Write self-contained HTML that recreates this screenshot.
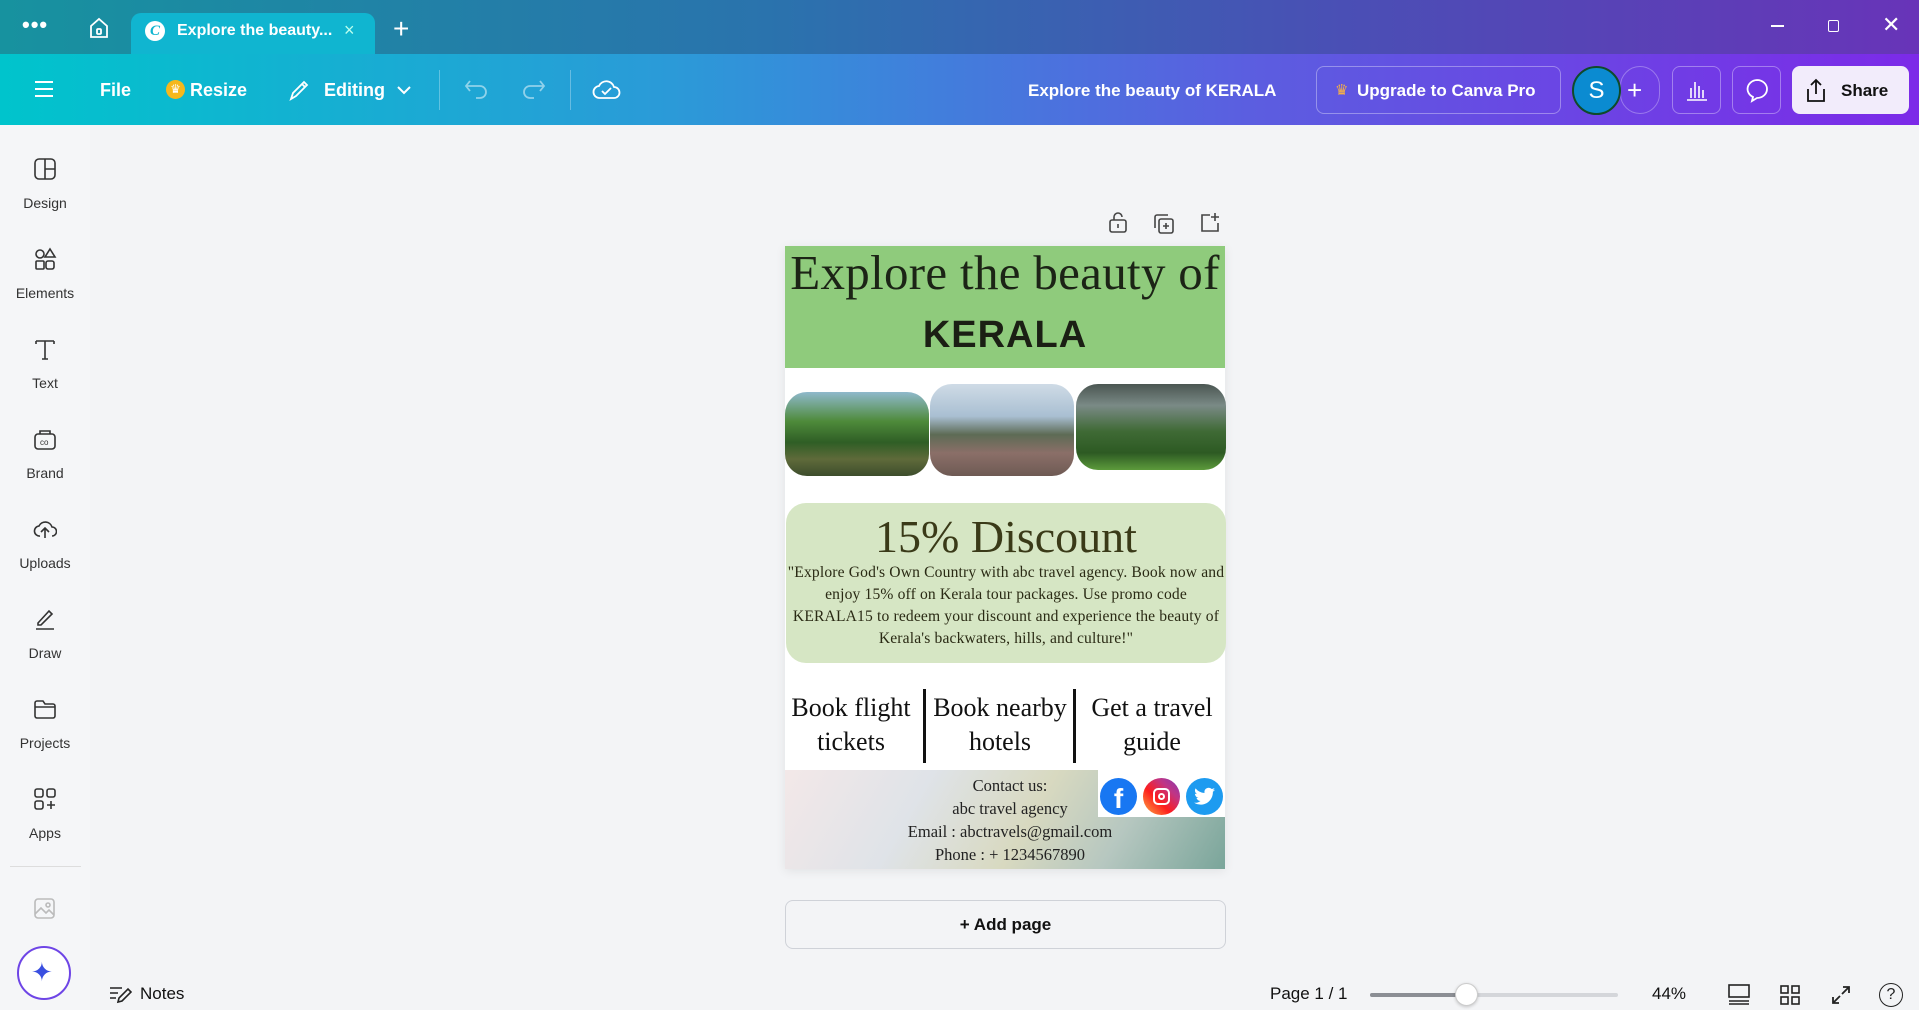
<!DOCTYPE html>
<html><head><meta charset="utf-8"><style>
*{margin:0;padding:0;box-sizing:border-box}
body{width:1919px;height:1010px;overflow:hidden;background:#f3f4f6;font-family:"Liberation Sans",sans-serif;position:relative}
.abs{position:absolute}
.titlebar{left:0;top:0;width:1919px;height:54px;background:linear-gradient(90deg,#17929f 0%,#2a73ad 40%,#4a4fb5 70%,#6834b8 100%)}
.toolbar{left:0;top:54px;width:1919px;height:71px;background:linear-gradient(90deg,#00c4cc 0%,#2b9ad8 35%,#5b5ee0 65%,#7c2ae8 100%)}
.tab{left:131px;top:13px;width:244px;height:41px;background:#10b5d0;border-radius:10px 10px 0 0}
.w{color:#fff;font-weight:bold;font-size:18px}
.side{left:0;top:125px;width:90px;height:885px;background:#f5f6f8}
.si{position:absolute;left:0;width:90px;text-align:center;font-size:14px;color:#333}
.si svg{display:block;margin:0 auto 14px}
.serif{font-family:"Liberation Serif",serif;color:#222}
.btn{border:1px solid rgba(255,255,255,.35);border-radius:8px}
</style></head><body>
<div class="abs titlebar"></div>
<div class="abs tab"></div>
<div class="abs w" style="left:22px;top:12px;font-size:22px;letter-spacing:1px">•••</div>
<svg class="abs" style="left:88px;top:17px" width="22" height="22" viewBox="0 0 22 22" fill="none" stroke="#fff" stroke-width="1.8"><path d="M3 9 11 2l8 7v11H3z"/><rect x="9" y="12" width="4" height="5" rx="1"/></svg>
<div class="abs" style="left:145px;top:21px;width:20px;height:20px;border-radius:50%;background:#fff;color:#10b5d0;font:bold italic 15px 'Liberation Serif';text-align:center;line-height:20px">C</div>
<div class="abs w" style="left:177px;top:22px;font-size:16px">Explore the beauty...</div>
<div class="abs" style="left:344px;top:20px;color:#bfe;font-size:18px">×</div>
<div class="abs" style="left:393px;top:13px;color:#fff;font-size:28px">+</div>
<div class="abs" style="left:1771px;top:25px;width:13px;height:1.5px;background:#fff"></div>
<div class="abs" style="left:1828px;top:20px;width:11px;height:12px;border:1.5px solid #fff;border-radius:2px"></div>
<div class="abs" style="left:1882px;top:12px;color:#fff;font-size:22px">✕</div>

<div class="abs toolbar"></div>
<svg class="abs" style="left:34px;top:80px" width="20" height="18"><path d="M1 2h18M1 9h18M1 16h18" stroke="#fff" stroke-width="2"/></svg>
<div class="abs w" style="left:100px;top:80px">File</div>
<div class="abs" style="left:166px;top:80px;width:19px;height:19px;border-radius:50%;background:#f5b81c;color:#fff;font-size:12px;text-align:center;line-height:19px">♛</div>
<div class="abs w" style="left:190px;top:80px">Resize</div>
<svg class="abs" style="left:287px;top:78px" width="24" height="24" fill="none" stroke="#fff" stroke-width="1.8"><path d="M4 21l2-6L17 4l3 3L9 18z M15 6l3 3"/></svg>
<div class="abs w" style="left:324px;top:80px">Editing</div>
<svg class="abs" style="left:396px;top:85px" width="16" height="10" fill="none" stroke="#fff" stroke-width="2"><path d="M2 2l6 6 6-6"/></svg>
<div class="abs" style="left:439px;top:70px;width:1px;height:40px;background:rgba(255,255,255,.3)"></div>
<svg class="abs" style="left:464px;top:78px" width="26" height="22" fill="none" stroke="rgba(255,255,255,.5)" stroke-width="1.8"><path d="M6 3L2 8l4 5M2 8h14a6 6 0 010 12h-4"/></svg>
<svg class="abs" style="left:520px;top:78px" width="26" height="22" fill="none" stroke="rgba(255,255,255,.5)" stroke-width="1.8"><path d="M20 3l4 5-4 5M24 8H10a6 6 0 000 12h4"/></svg>
<div class="abs" style="left:570px;top:70px;width:1px;height:40px;background:rgba(255,255,255,.3)"></div>
<svg class="abs" style="left:592px;top:76px" width="30" height="26" fill="none" stroke="#fff" stroke-width="1.8"><path d="M8 22a6 6 0 01-1-12 8 8 0 0115 1 5 5 0 010 11z"/><path d="M10 15l3 3 6-6"/></svg>
<div class="abs w" style="left:1028px;top:81px;font-size:17px">Explore the beauty of KERALA</div>
<div class="abs btn" style="left:1316px;top:66px;width:245px;height:48px"></div>
<div class="abs" style="left:1335px;top:81px;color:#f7b045;font-size:15px">♛</div>
<div class="abs w" style="left:1357px;top:81px;font-size:17px">Upgrade to Canva Pro</div>
<div class="abs" style="left:1620px;top:66px;width:40px;height:48px;border:1px solid rgba(255,255,255,.3);border-radius:24px"></div>
<div class="abs w" style="left:1627px;top:75px;font-size:26px;font-weight:normal">+</div>
<div class="abs" style="left:1572px;top:66px;width:49px;height:49px;border-radius:50%;background:#0b8bd1;border:2px solid #0f4a2a;color:#fff;font-size:24px;text-align:center;line-height:45px">S</div>
<div class="abs btn" style="left:1672px;top:66px;width:49px;height:48px"></div>
<svg class="abs" style="left:1685px;top:78px" width="24" height="24" fill="none" stroke="#fff" stroke-width="1.6"><path d="M2 22h20M6 20V10M10 20V4M14 20V8M18 20V12"/></svg>
<div class="abs btn" style="left:1732px;top:66px;width:49px;height:48px"></div>
<svg class="abs" style="left:1744px;top:77px" width="26" height="26" fill="none" stroke="#fff" stroke-width="1.8"><path d="M13 3a10 9 0 110 18l-5 3 1-4a10 9 0 014-17z"/></svg>
<div class="abs" style="left:1792px;top:66px;width:117px;height:48px;background:#f2ecfb;border-radius:8px"></div>
<svg class="abs" style="left:1804px;top:77px" width="24" height="26" fill="none" stroke="#111" stroke-width="1.8"><path d="M12 17V3M7 8l5-5 5 5M4 12v12h16V12"/></svg>
<div class="abs" style="left:1841px;top:81px;font-size:17px;color:#111;font-weight:bold">Share</div>

<div class="abs side">
<div class="si" style="top:32px"><svg width="24" height="24" fill="none" stroke="#333" stroke-width="1.6"><rect x="2" y="2" width="20" height="20" rx="4"/><path d="M12 2v20M12 12h10"/></svg>Design</div>
<div class="si" style="top:122px"><svg width="24" height="24" fill="none" stroke="#333" stroke-width="1.6"><circle cx="7" cy="7" r="4"/><path d="M17 2l5 8h-10z"/><rect x="3" y="14" width="8" height="8" rx="1"/><rect x="13" y="14" width="8" height="8" rx="2"/></svg>Elements</div>
<div class="si" style="top:212px"><svg width="24" height="24" fill="none" stroke="#333" stroke-width="1.6"><path d="M3 4h18M12 4v18M3 4v3M21 4v3M9 22h6"/></svg>Text</div>
<div class="si" style="top:302px"><svg width="24" height="24" fill="none" stroke="#333" stroke-width="1.6"><rect x="2" y="7" width="20" height="15" rx="3"/><path d="M7 7V4h10v3"/><text x="7" y="18" font-size="8" fill="#333" stroke="none">co</text></svg>Brand</div>
<div class="si" style="top:392px"><svg width="24" height="24" fill="none" stroke="#333" stroke-width="1.6"><path d="M7 19a5 5 0 01-1-10 7 7 0 0113 1 4 4 0 010 9"/><path d="M12 21v-9M8 15l4-4 4 4"/></svg>Uploads</div>
<div class="si" style="top:482px"><svg width="24" height="24" fill="none" stroke="#333" stroke-width="1.6"><path d="M5 16L16 4l3 3L8 18H5z M3 22h18"/></svg>Draw</div>
<div class="si" style="top:572px"><svg width="24" height="24" fill="none" stroke="#333" stroke-width="1.6"><path d="M2 6a2 2 0 012-2h6l2 3h8a2 2 0 012 2v10a2 2 0 01-2 2H4a2 2 0 01-2-2z M2 10h20"/></svg>Projects</div>
<div class="si" style="top:662px"><svg width="24" height="24" fill="none" stroke="#333" stroke-width="1.6"><rect x="2" y="2" width="8" height="8" rx="2"/><rect x="14" y="2" width="8" height="8" rx="2"/><rect x="2" y="14" width="8" height="8" rx="2"/><path d="M18 14v8M14 18h8"/></svg>Apps</div>
<div class="abs" style="left:10px;top:741px;width:71px;height:1px;background:#ddd"></div>
<svg class="abs" style="left:33px;top:771px" width="24" height="24" fill="none" stroke="#bbb" stroke-width="1.6"><rect x="2" y="3" width="19" height="19" rx="3"/><path d="M2 18l6-6 5 5 3-3 5 5"/><circle cx="15" cy="9" r="2"/></svg>
<div class="abs" style="left:17px;top:821px;width:54px;height:54px;border-radius:50%;background:#fff;border:2px solid #6e45e6"></div>
<div class="abs" style="left:31px;top:832px;color:#3a4fe0;font-size:26px">✦</div>
</div>

<svg class="abs" style="left:1108px;top:211px" width="20" height="22" fill="none" stroke="#444" stroke-width="1.6"><rect x="2" y="9" width="16" height="12" rx="2"/><path d="M6 9V6a4 4 0 018 0M10 13v4"/></svg>
<svg class="abs" style="left:1153px;top:213px" width="22" height="22" fill="none" stroke="#444" stroke-width="1.6"><rect x="6" y="6" width="14" height="14" rx="2"/><path d="M15 2H4a2 2 0 00-2 2v11M13 10v6M10 13h6"/></svg>
<svg class="abs" style="left:1198px;top:211px" width="22" height="22" fill="none" stroke="#444" stroke-width="1.6"><path d="M12 4H4v16h16v-8M17 2v8M13 6h8"/></svg>

<div class="abs" style="left:785px;top:246px;width:440px;height:623px;background:#fff;box-shadow:0 2px 10px rgba(0,0,0,.08)"></div>
<div class="abs" style="left:785px;top:246px;width:440px;height:122px;background:#8fcb7c"></div>
<div class="abs serif" style="left:775px;top:244px;width:460px;text-align:center;font-size:49px;line-height:58px;color:#1c2416;letter-spacing:.3px">Explore the beauty of</div>
<div class="abs" style="left:785px;top:314px;width:440px;text-align:center;font:900 38px 'Liberation Sans',sans-serif;color:#1b1f14;letter-spacing:1px">KERALA</div>
<div class="abs" style="left:785px;top:392px;width:144px;height:84px;border-radius:22px;background:linear-gradient(180deg,#8fb9cc 0%,#4e8a3a 35%,#2f5e25 60%,#5f6a3a 80%,#3d4d2c 100%)"></div>
<div class="abs" style="left:930px;top:384px;width:144px;height:92px;border-radius:22px;background:linear-gradient(180deg,#cfdbe6 0%,#a9bfd2 35%,#5d6b55 55%,#8b6f68 75%,#6e5a54 100%)"></div>
<div class="abs" style="left:1076px;top:384px;width:150px;height:86px;border-radius:22px;background:linear-gradient(180deg,#4b5652 0%,#7a8a86 25%,#3f6a35 55%,#2d5a23 80%,#5c9a3b 100%)"></div>
<div class="abs" style="left:786px;top:503px;width:440px;height:160px;border-radius:20px;background:#d6e6c4"></div>
<div class="abs serif" style="left:786px;top:510px;width:440px;text-align:center;font-size:46px;color:#3a3a18">15% Discount</div>
<div class="abs serif" style="left:786px;top:562px;width:440px;text-align:center;font-size:15.6px;line-height:22px;color:#2a2a14;letter-spacing:.15px">"Explore God's Own Country with abc travel agency. Book now and enjoy 15% off on Kerala tour packages. Use promo code KERALA15 to redeem your discount and experience the beauty of Kerala's backwaters, hills, and culture!"</div>
<div class="abs serif" style="left:786px;top:691px;width:130px;text-align:center;font-size:26px;line-height:34px;color:#111">Book flight tickets</div>
<div class="abs serif" style="left:926px;top:691px;width:148px;text-align:center;font-size:26px;line-height:34px;color:#111">Book nearby hotels</div>
<div class="abs serif" style="left:1076px;top:691px;width:152px;text-align:center;font-size:26px;line-height:34px;color:#111">Get a travel guide</div>
<div class="abs" style="left:923px;top:689px;width:3px;height:74px;background:#111"></div>
<div class="abs" style="left:1073px;top:689px;width:3px;height:74px;background:#111"></div>
<div class="abs" style="left:785px;top:770px;width:440px;height:99px;background:linear-gradient(120deg,#f3e8e8 0%,#dfe3e8 30%,#d8d9c0 55%,#b6c7c0 75%,#7aa59a 100%)"></div>
<div class="abs" style="left:1098px;top:770px;width:127px;height:47px;background:#fff"></div>
<div class="abs serif" style="left:860px;top:774px;width:300px;text-align:center;font-size:16.5px;line-height:23px;color:#222">Contact us:<br>abc travel agency<br>Email : abctravels@gmail.com<br>Phone : + 1234567890</div>
<div class="abs" style="left:1100px;top:778px;width:37px;height:37px;border-radius:50%;background:#1877f2;color:#fff;font:bold 28px 'Liberation Sans';text-align:center;line-height:42px">f</div>
<div class="abs" style="left:1143px;top:778px;width:37px;height:37px;border-radius:50%;background:linear-gradient(45deg,#fcb045,#fd1d1d 40%,#c13584 70%,#833ab4)"></div>
<div class="abs" style="left:1153px;top:788px;width:17px;height:17px;border:2px solid #fff;border-radius:5px"></div>
<div class="abs" style="left:1158px;top:793px;width:7px;height:7px;border:2px solid #fff;border-radius:50%"></div>
<div class="abs" style="left:1186px;top:778px;width:37px;height:37px;border-radius:50%;background:#1d9bf0"></div>
<svg class="abs" style="left:1194px;top:787px" width="22" height="20" viewBox="0 0 24 20"><path fill="#fff" d="M23 2a9 9 0 01-2.7.8A4.7 4.7 0 0022.4.2a9 9 0 01-3 1.1A4.7 4.7 0 0011.5 5.6 13.3 13.3 0 011.7.6a4.7 4.7 0 001.5 6.3A4.6 4.6 0 011 6.3a4.7 4.7 0 003.8 4.6 4.7 4.7 0 01-2.1.1 4.7 4.7 0 004.4 3.3A9.4 9.4 0 010 16.2 13.3 13.3 0 007.2 18.3c8.6 0 13.4-7.2 13.4-13.4v-.6A9.6 9.6 0 0023 2z"/></svg>

<div class="abs" style="left:785px;top:900px;width:441px;height:49px;border:1px solid #cfd2d8;border-radius:8px;text-align:center;line-height:47px;font-size:17px;color:#111;font-weight:bold">+ Add page</div>

<svg class="abs" style="left:108px;top:984px" width="24" height="20" fill="none" stroke="#222" stroke-width="1.6"><path d="M2 4h12M2 9h8M2 14h6M10 18l1-4 9-9 3 3-9 9z"/></svg>
<div class="abs" style="left:140px;top:984px;font-size:17px;color:#111">Notes</div>
<div class="abs" style="left:1270px;top:984px;font-size:17px;color:#111">Page 1 / 1</div>
<div class="abs" style="left:1370px;top:993px;width:248px;height:4px;background:#d4d6da;border-radius:2px"></div>
<div class="abs" style="left:1370px;top:993px;width:96px;height:4px;background:#8b8e94;border-radius:2px"></div>
<div class="abs" style="left:1455px;top:983px;width:23px;height:23px;border-radius:50%;background:#fff;border:1px solid #ccc;box-shadow:0 1px 3px rgba(0,0,0,.2)"></div>
<div class="abs" style="left:1652px;top:984px;font-size:17px;color:#111">44%</div>
<svg class="abs" style="left:1727px;top:983px" width="24" height="22" fill="none" stroke="#222" stroke-width="1.6"><rect x="2" y="2" width="20" height="12"/><path d="M2 18h20M2 21h20"/></svg>
<svg class="abs" style="left:1779px;top:984px" width="22" height="22" fill="none" stroke="#222" stroke-width="1.6"><rect x="2" y="2" width="7" height="7"/><rect x="13" y="2" width="7" height="7"/><rect x="2" y="13" width="7" height="7"/><rect x="13" y="13" width="7" height="7"/></svg>
<svg class="abs" style="left:1830px;top:984px" width="22" height="22" fill="none" stroke="#222" stroke-width="1.8"><path d="M13 3h6v6M19 3l-7 7M9 19H3v-6M3 19l7-7"/></svg>
<div class="abs" style="left:1879px;top:983px;width:24px;height:24px;border:1.8px solid #222;border-radius:50%;text-align:center;font-size:16px;line-height:21px;color:#222">?</div>
</body></html>
